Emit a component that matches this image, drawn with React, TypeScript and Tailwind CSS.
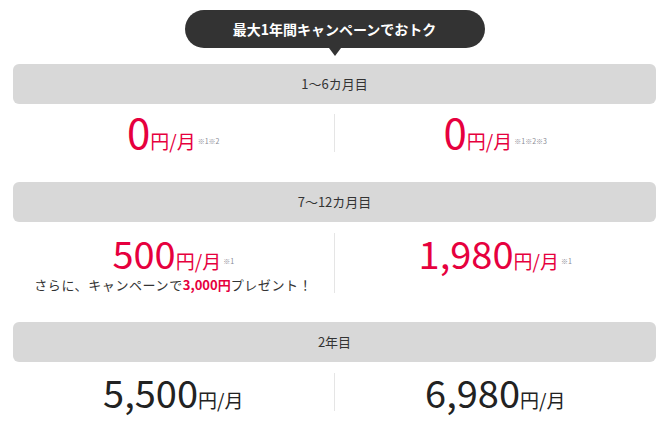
const jp = "font-['Noto_Sans_CJK_JP','Noto_Sans',sans-serif]";

function Price({
  num,
  red,
  note,
  big,
}: {
  num: string;
  red?: boolean;
  note?: string;
  big?: boolean;
}) {
  const color = red ? "text-[#e6003e]" : "text-[#222]";
  return (
    <div className={`flex items-baseline ${color}`}>
      <span className={`${big ? "text-[42px]" : "text-[38px]"} leading-none`}>{num}</span>
      <span className="text-[19px] leading-none">円/月</span>
      {note && (
        <span className="relative -top-[5px] ml-[2px] text-[7px] leading-none text-[#8a8a95]">
          {note}
        </span>
      )}
    </div>
  );
}

function Bar({ label }: { label: string }) {
  return (
    <div className="h-[40px] rounded-[6px] bg-[#d8d8d8] flex items-center justify-center text-[13px] text-[#333]">
      {label}
    </div>
  );
}

export default function App() {
  return (
    <div className={`w-[669px] h-[441px] bg-white px-[13px] pt-[10px] overflow-hidden ${jp}`}>
      {/* Campaign bubble */}
      <div className="flex justify-center">
        <div className="relative w-[300px] h-[38px] rounded-full bg-[#333] flex items-center justify-center text-white text-[14px] font-bold">
          最大1年間キャンペーンでおトク
          <span className="absolute left-1/2 -translate-x-1/2 top-full w-0 h-0 border-l-[6px] border-r-[6px] border-t-[8px] border-l-transparent border-r-transparent border-t-[#333]" />
        </div>
      </div>

      {/* 1-6 months */}
      <div className="mt-[16px]">
        <Bar label="1〜6カ月目" />
      </div>
      <div className="mt-[10px] grid grid-cols-2">
        <div className="h-[38px] border-r border-[#e5e5e5] flex items-end justify-center">
          <Price num="0" red big note="※1※2" />
        </div>
        <div className="h-[38px] flex items-end justify-center">
          <Price num="0" red big note="※1※2※3" />
        </div>
      </div>

      {/* 7-12 months */}
      <div className="mt-[30px]">
        <Bar label="7〜12カ月目" />
      </div>
      <div className="mt-[11px] grid grid-cols-2">
        <div className="h-[60px] border-r border-[#e5e5e5] flex flex-col items-center pt-[1px]">
          <Price num="500" red note="※1" />
          <p className="mt-[4px] text-[13px] leading-[17px] text-[#333] tracking-[0.6px]">
            さらに、キャンペーンで
            <span className="font-bold text-[#e6003e] tracking-normal">3,000円</span>
            プレゼント！
          </p>
        </div>
        <div className="h-[60px] flex flex-col items-center pt-[1px]">
          <Price num="1,980" red note="※1" />
        </div>
      </div>

      {/* 2nd year */}
      <div className="mt-[29px]">
        <Bar label="2年目" />
      </div>
      <div className="mt-[11px] grid grid-cols-2">
        <div className="h-[38px] border-r border-[#e5e5e5] flex items-end justify-center">
          <Price num="5,500" />
        </div>
        <div className="h-[38px] flex items-end justify-center">
          <Price num="6,980" />
        </div>
      </div>
    </div>
  );
}
